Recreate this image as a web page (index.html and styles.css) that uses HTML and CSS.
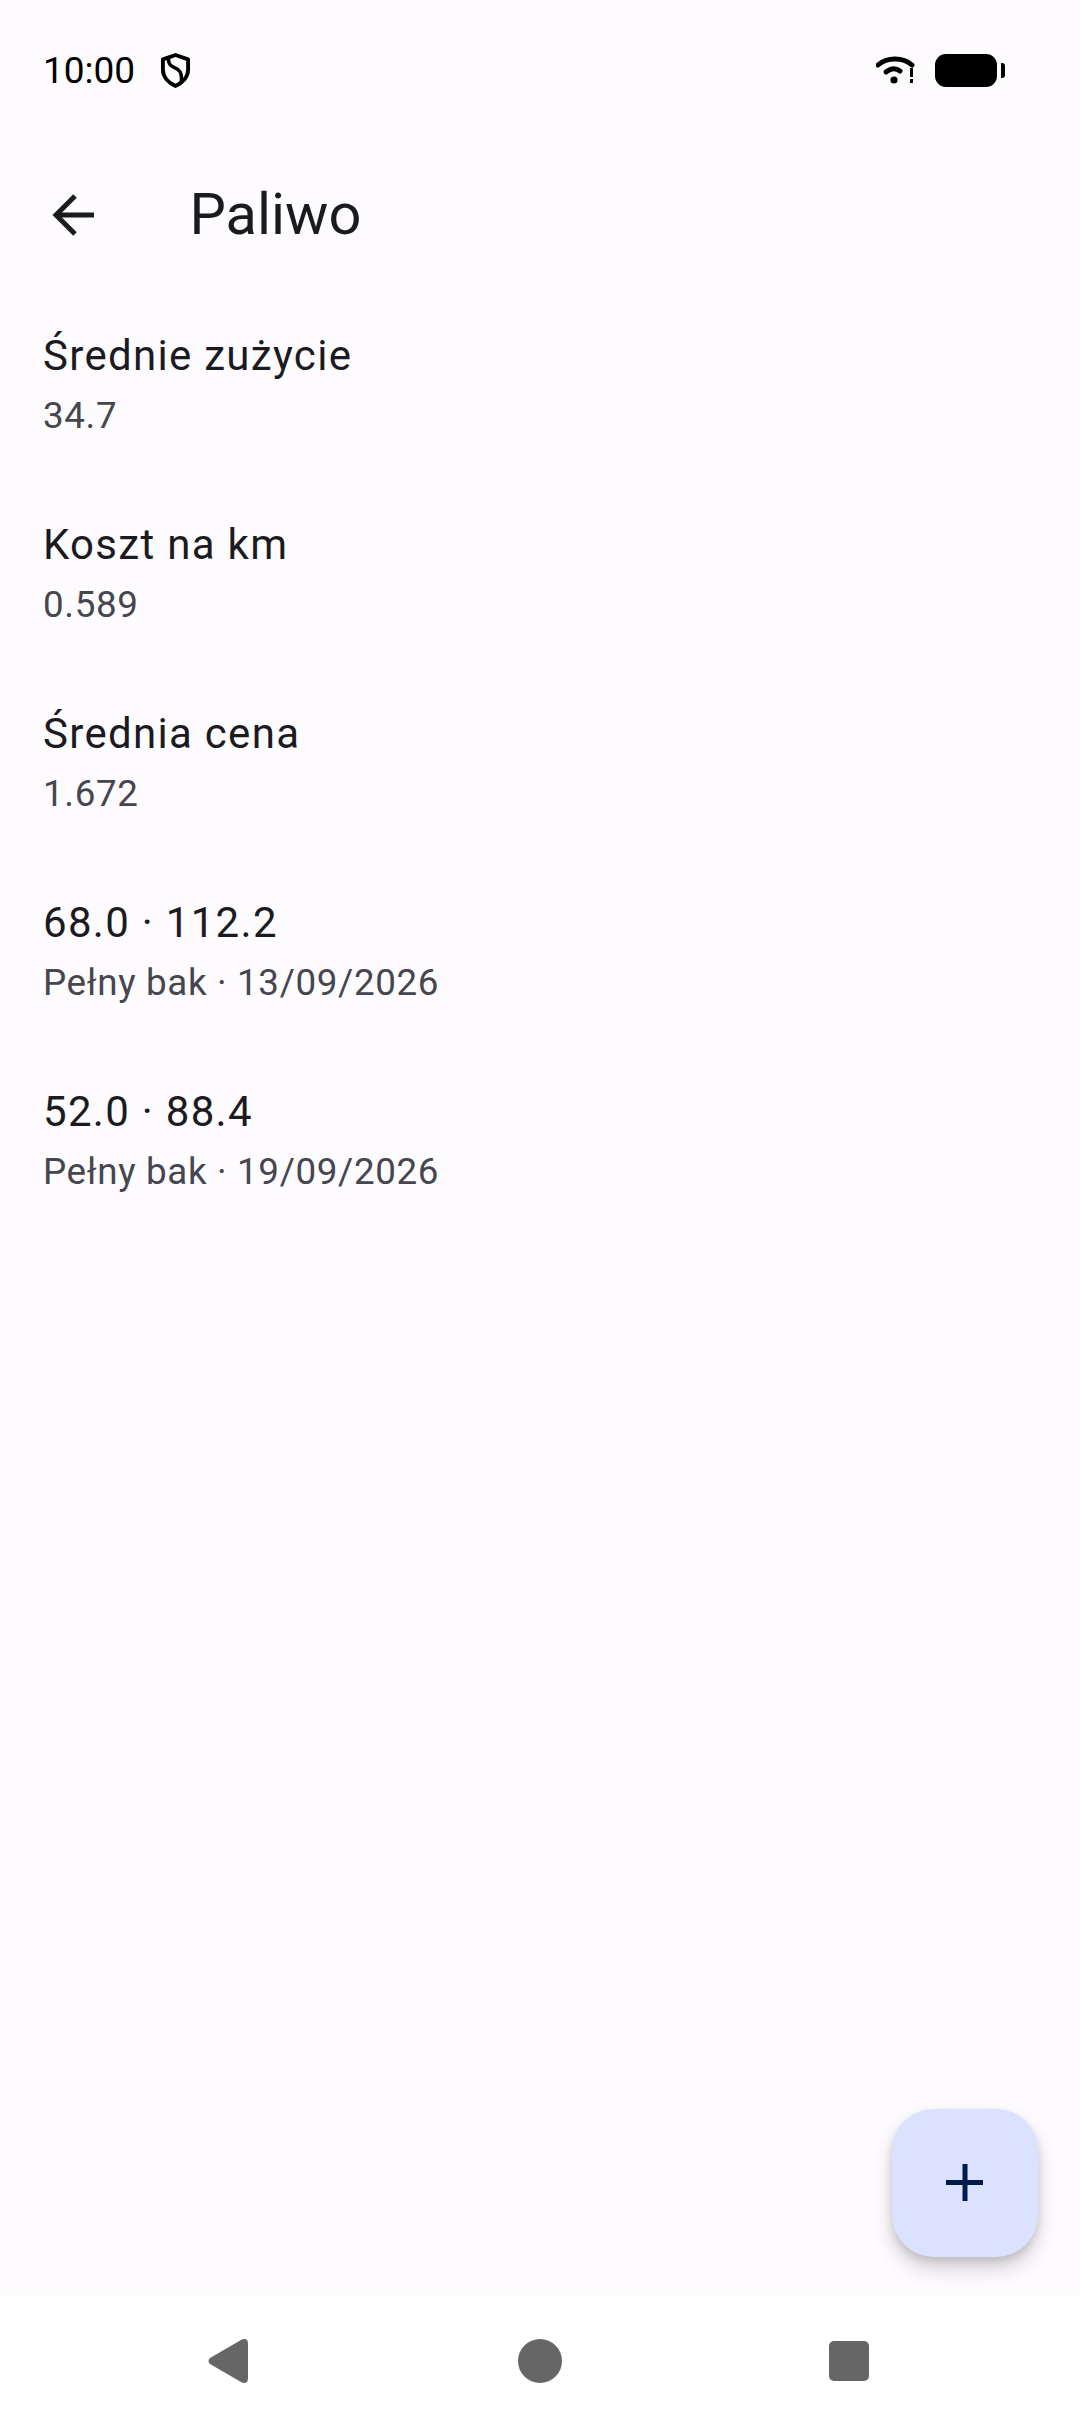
FILE: index.html
```html
<!DOCTYPE html>
<html lang="pl">
<head>
    <meta charset="UTF-8">
    <meta name="viewport" content="width=device-width, initial-scale=1.0">
    <title>Paliwo</title>
    <link rel="stylesheet" href="styles.css">
</head>
<body>
    <div class="screen">
        <div class="status-bar">
            <span class="clock">10:00</span>
            <svg class="shield" viewBox="0 0 32 36" width="31" height="35">
                <path d="M16 2 L29 6.500 V17 C29 25 23 31 16 34 C9 31 3 25 3 17 V6.500 Z" fill="none" stroke="#000" stroke-width="4" stroke-linejoin="round"/>
                <path d="M9 5 C8 11 11 13 15 15 C20 17 23 20 22 30" fill="none" stroke="#000" stroke-width="3.600"/>
            </svg>
            <div class="status-right">
                <svg class="wifi" viewBox="0 0 40 32" width="40" height="32">
                    <path d="M2 11 C11 3 27 3 36 11" fill="none" stroke="#000" stroke-width="5" stroke-linecap="round"/>
                    <path d="M10 18 C15 14 20 14 24 17" fill="none" stroke="#000" stroke-width="5" stroke-linecap="round"/>
                    <circle cx="18" cy="26" r="3.600" fill="#000"/>
                    <rect x="34" y="14" width="3" height="9" fill="#000"/>
                    <rect x="34" y="25" width="3" height="4" fill="#000"/>
                </svg>
                <div class="battery"></div>
                <div class="battery-tip"></div>
            </div>
        </div>

        <div class="app-bar">
            <svg class="back-icon" viewBox="0 0 48 48" width="48" height="48">
                <path d="M46 24 H8 M27 5 L8 24 L27 43" fill="none" stroke="#1b1b1f" stroke-width="5"/>
            </svg>
            <h1 class="page-title">Paliwo</h1>
        </div>

        <div class="list">
            <div class="list-item">
                <div class="item-title">Średnie zużycie</div>
                <div class="item-sub">34.7</div>
            </div>
            <div class="list-item">
                <div class="item-title">Koszt na km</div>
                <div class="item-sub">0.589</div>
            </div>
            <div class="list-item">
                <div class="item-title">Średnia cena</div>
                <div class="item-sub">1.672</div>
            </div>
            <div class="list-item">
                <div class="item-title">68.0 · 112.2</div>
                <div class="item-sub">Pełny bak · 13/09/2026</div>
            </div>
            <div class="list-item">
                <div class="item-title">52.0 · 88.4</div>
                <div class="item-sub">Pełny bak · 19/09/2026</div>
            </div>
        </div>

        <button class="fab" aria-label="Dodaj">
            <svg viewBox="0 0 38 38" width="38" height="38">
                <path d="M19 0 V37 M0 18.500 H37" fill="none" stroke="#001a4d" stroke-width="5"/>
            </svg>
        </button>

        <div class="nav-bar">
            <svg viewBox="0 0 40 44" width="40" height="44">
                <path d="M33 1 L2 19 Q-1 22 2 25 L33 43 Q40 46 40 39 V5 Q40 -2 33 1 Z" fill="#666"/>
            </svg>
            <div class="nav-home"></div>
            <div class="nav-recent"></div>
        </div>
    </div>
</body>
</html>
```

FILE: styles.css
```css
html, body {
    margin: 0;
    padding: 0;
}
body {
    font-family: Roboto, "Noto Sans", sans-serif;
    background-color: #fefbff;
    color: #1b1b1f;
}
.screen {
    position: relative;
    width: 1080px;
    height: 2424px;
    display: flex;
    flex-direction: column;
    overflow: hidden;
}

/* status bar */
.status-bar {
    height: 130px;
    box-sizing: border-box;
    padding: 10px 75px 0 43px;
    display: flex;
    align-items: center;
    color: #000;
}
.clock {
    font-size: 37px;
    width: 117px;
}
.status-right {
    margin-left: auto;
    display: flex;
    align-items: center;
}
.wifi {
    margin-right: -1px;
}
.battery {
    width: 62px;
    height: 33px;
    margin-left: 20px;
    background-color: #000;
    border-radius: 11px;
}
.battery-tip {
    width: 4px;
    height: 15px;
    margin-left: 4px;
    background-color: #000;
    border-radius: 0 3px 3px 0;
}

/* top app bar */
.app-bar {
    height: 168px;
    display: flex;
    align-items: center;
    padding-left: 48px;
}
.back-icon {
    margin-top: 2px;
}
.page-title {
    margin: 0 0 0 93.500px;
    font-size: 57.750px;
    font-weight: 400;
}

/* rows */
.list {
    display: flex;
    flex-direction: column;
}
.list-item {
    height: 189px;
    box-sizing: border-box;
    padding: 26px 43px 0;
}
.item-title {
    font-size: 42px;
    line-height: 63px;
    letter-spacing: 1.3px;
}
.item-sub {
    margin-top: 2px;
    font-size: 36.750px;
    line-height: 53px;
    letter-spacing: 0.65px;
    color: #46464f;
}

/* add button */
.fab {
    position: absolute;
    left: 892px;
    top: 2109px;
    width: 146px;
    height: 148px;
    border: none;
    padding: 0;
    border-radius: 42px;
    background-color: #dae2ff;
    box-shadow: 0 12px 20px rgba(0,0,0,0.17), 0 4px 8px rgba(0,0,0,0.12);
    display: flex;
    align-items: center;
    justify-content: center;
}

/* navigation */
.nav-bar {
    margin-top: auto;
    height: 129px;
    box-sizing: border-box;
    padding: 3px 0 0 208px;
    background-color: #fff;
    display: flex;
    align-items: center;
}
.nav-home {
    width: 44px;
    height: 44px;
    margin-left: 270px;
    background-color: #666;
    border-radius: 50%;
}
.nav-recent {
    width: 40px;
    height: 40px;
    margin-left: 267px;
    background-color: #666;
    border-radius: 5px;
}
```
